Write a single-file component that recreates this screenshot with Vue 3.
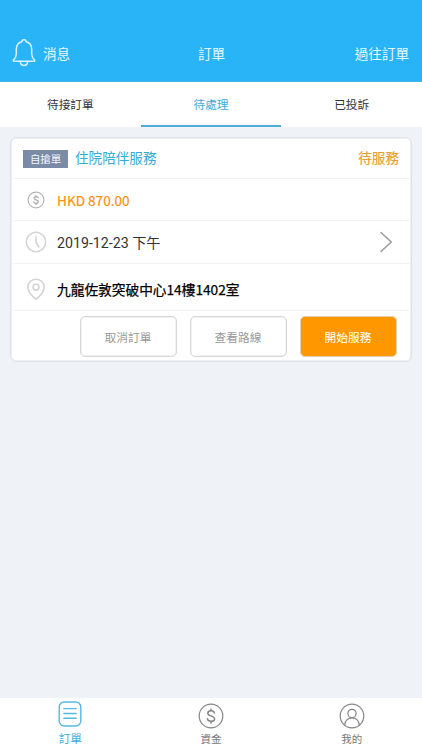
<script setup>
const tabs = ['待接訂單', '待處理', '已投訴']
const activeTab = 1
</script>

<template>
  <div class="screen">
    <header class="header">
      <div class="messages">
        <svg class="bell" width="24" height="30" viewBox="0 0 24 30">
          <path d="M1.5 23.2V21.8C4 20 4.3 18 4.3 15V11.5C4.3 7 7 4.5 9.8 3.8C9.8 1 14.2 1 14.2 3.8C17 4.5 19.7 7 19.7 11.5V15C19.7 18 20 20 22.5 21.8V23.2Z" />
          <path d="M8.3 23.4C8.5 28.7 15.5 28.7 15.7 23.4" />
        </svg>
        <span>消息</span>
      </div>
      <div class="title">訂單</div>
      <div class="history">過往訂單</div>
    </header>

    <nav class="tabs">
      <div v-for="(tab, i) in tabs" :key="tab" class="tab" :class="{ active: i === activeTab }">{{ tab }}</div>
    </nav>

    <main class="content">
      <section class="card">
        <div class="row heading">
          <span class="tag">自搶單</span>
          <span class="service">住院陪伴服務</span>
          <span class="status">待服務</span>
        </div>
        <div class="row price">
          <span class="icon">
            <svg width="18" height="18" viewBox="0 0 18 18">
              <circle cx="9" cy="9" r="7.9" stroke="#b8b8b8" stroke-width="1.2" />
              <path stroke="#aaa" stroke-width="1.2" d="M11.3 6.9C11 5.2 7 5.1 7 7.1C7 9.2 11.3 8.5 11.3 10.8C11.3 12.9 7 12.9 6.7 10.9M9 4.6V5.8M9 12.2V13.4" />
            </svg>
          </span>
          <span>HKD 870.00</span>
        </div>
        <div class="row date">
          <span class="icon">
            <svg width="22" height="22" viewBox="0 0 22 22">
              <circle cx="11" cy="11" r="9.7" stroke="#d6d6d6" stroke-width="1.6" />
              <path stroke="#d2d2d2" stroke-width="1.5" d="M11 5.2V11.5L14 16" />
            </svg>
          </span>
          <span>2019-12-23 下午</span>
          <svg class="chevron" width="14" height="22" viewBox="0 0 14 22">
            <path d="M2 1.5L12.3 11L2 20.5" />
          </svg>
        </div>
        <div class="row address">
          <span class="icon">
            <svg width="20" height="24" viewBox="0 0 20 24">
              <path stroke="#d3d3d3" stroke-width="1.6" d="M10 22.2C7.5 20.2 1.8 15 1.8 10.2A8.2 8 0 0 1 18.2 10.2C18.2 15 12.5 20.2 10 22.2Z" />
              <circle cx="10" cy="10.2" r="2.9" stroke="#d3d3d3" stroke-width="1.6" />
            </svg>
          </span>
          <span class="place">九龍佐敦突破中心14樓1402室</span>
        </div>
        <div class="actions">
          <button class="btn">取消訂單</button>
          <button class="btn">查看路線</button>
          <button class="btn primary">開始服務</button>
        </div>
      </section>
    </main>

    <footer class="bottom">
      <div class="item current">
        <svg width="24" height="26" viewBox="0 0 24 26">
          <rect x="1.2" y="1" width="21.6" height="24" rx="5" />
          <path d="M5.8 7.6H18.2M5.8 12.5H18.2M5.8 17.3H18.2" />
        </svg>
        <span>訂單</span>
      </div>
      <div class="item">
        <svg width="26" height="26" viewBox="0 0 26 26">
          <circle cx="13" cy="13" r="11.8" />
          <path stroke-width="1.5" d="M16.4 10C16 6.9 9.8 6.9 9.8 10.2C9.8 13.4 16.6 12.3 16.6 15.9C16.6 19.2 9.8 19.2 9.4 15.7M13 6V7.6M13 18.4V20" />
        </svg>
        <span>資金</span>
      </div>
      <div class="item">
        <svg width="26" height="26" viewBox="0 0 26 26">
          <circle cx="13" cy="13" r="11.8" />
          <circle cx="13" cy="10.4" r="4.1" />
          <path d="M5.7 22.2C6 12.3 20 12.3 20.3 22.2" />
        </svg>
        <span>我的</span>
      </div>
    </footer>
  </div>
</template>

<style>
body {
  margin: 0;
}
</style>

<style scoped>
.screen {
  box-sizing: border-box;
  width: 422px;
  height: 750px;
  display: flex;
  flex-direction: column;
  background: #eff3f7;
  font-family: "Noto Sans CJK TC", sans-serif;
  overflow: hidden;
}
svg {
  display: block;
  fill: none;
  stroke-linecap: round;
  stroke-linejoin: round;
}
.header {
  box-sizing: border-box;
  flex: none;
  height: 82px;
  padding: 38px 13px 14px 12px;
  display: grid;
  grid-template-columns: 1fr auto 1fr;
  align-items: center;
  background: #29b4f8;
  border-bottom: 1px solid #45b4e8;
  color: #e9f8ff;
  font-size: 13.6px;
  line-height: 30px;
}
.messages {
  display: flex;
  align-items: center;
  gap: 7px;
}
.bell {
  stroke: #d8f3ff;
  stroke-width: 1.5;
}
.title {
  padding-left: 2px;
}
.history {
  text-align: right;
}
.tabs {
  flex: none;
  display: flex;
  height: 45px;
  background: #fff;
}
.tab {
  box-sizing: border-box;
  flex: 1;
  border-bottom: 2px solid transparent;
  text-align: center;
  font-size: 11.7px;
  line-height: 43px;
  color: #333;
}
.tab.active {
  color: #3cacd6;
  border-color: #50afd8;
}
.content {
  flex: 1;
  padding: 10px 10px 0;
}
.card {
  box-sizing: border-box;
  height: 225px;
  display: flex;
  flex-direction: column;
  background: #fff;
  border: 1px solid #dfe2e6;
  border-radius: 6px;
  box-shadow: inset 0 0 0 1px #eceef0;
}
.row {
  box-sizing: border-box;
  flex: none;
  height: 42px;
  display: flex;
  align-items: center;
  padding: 0 12px 0 14px;
  border-bottom: 1px solid #f3f3f3;
  font-size: 13.6px;
}
.icon {
  width: 22px;
  margin-right: 10px;
  display: flex;
  justify-content: center;
}
.heading {
  height: 41px;
  padding-left: 12px;
}
.tag {
  width: 45px;
  height: 18px;
  margin-top: 1px;
  margin-right: 7px;
  background: #7b8ba6;
  color: #f4f7fb;
  font-size: 10.4px;
  line-height: 18px;
  text-align: center;
}
.heading .service,
.heading .status {
  padding-bottom: 2px;
}
.service {
  color: #36abd3;
}
.status {
  margin-left: auto;
  color: #e5a02c;
  -webkit-text-stroke: 0.15px #e5a02c;
}
.price {
  color: #f6920f;
  -webkit-text-stroke: 0.2px #f6920f;
}
.date {
  height: 43px;
  padding-right: 18px;
  color: #333;
  font-family: Roboto, "Noto Sans CJK TC", sans-serif;
  font-size: 14.2px;
}
.chevron {
  margin-left: auto;
  stroke: #9a9a9a;
  stroke-width: 1.5;
}
.address {
  height: 47px;
  color: #000;
  font-size: 13.7px;
  -webkit-text-stroke: 0.25px #000;
}
.address .icon {
  padding-top: 3px;
}
.place {
  padding-top: 3px;
}
.actions {
  display: flex;
  justify-content: flex-end;
  gap: 13px;
  padding: 5px 14.5px 0 0;
}
.btn {
  box-sizing: border-box;
  width: 97px;
  height: 41px;
  padding: 0 0 1px;
  border: 1px solid #d8d8d8;
  border-radius: 5px;
  background: #fff;
  box-shadow: inset 0 0 0 0.5px #e4e4e4;
  color: #999;
  font-family: inherit;
  font-size: 11.7px;
}
.btn.primary {
  background: #ff9800;
  border-color: #e4cfae;
  box-shadow: none;
  color: #fff;
}
.bottom {
  box-sizing: border-box;
  flex: none;
  height: 52px;
  padding-top: 5px;
  display: flex;
  background: #fff;
}
.item {
  flex: 1;
  display: flex;
  flex-direction: column;
  align-items: center;
  color: #777;
  font-size: 10.5px;
  line-height: 20px;
}
.item svg {
  stroke: #858585;
  stroke-width: 1.2;
}
.item.current {
  margin-top: -2px;
  color: #42add8;
  font-size: 11.7px;
  line-height: 22px;
}
.item.current svg {
  stroke: #55b9e0;
  stroke-width: 1.4;
}
</style>
